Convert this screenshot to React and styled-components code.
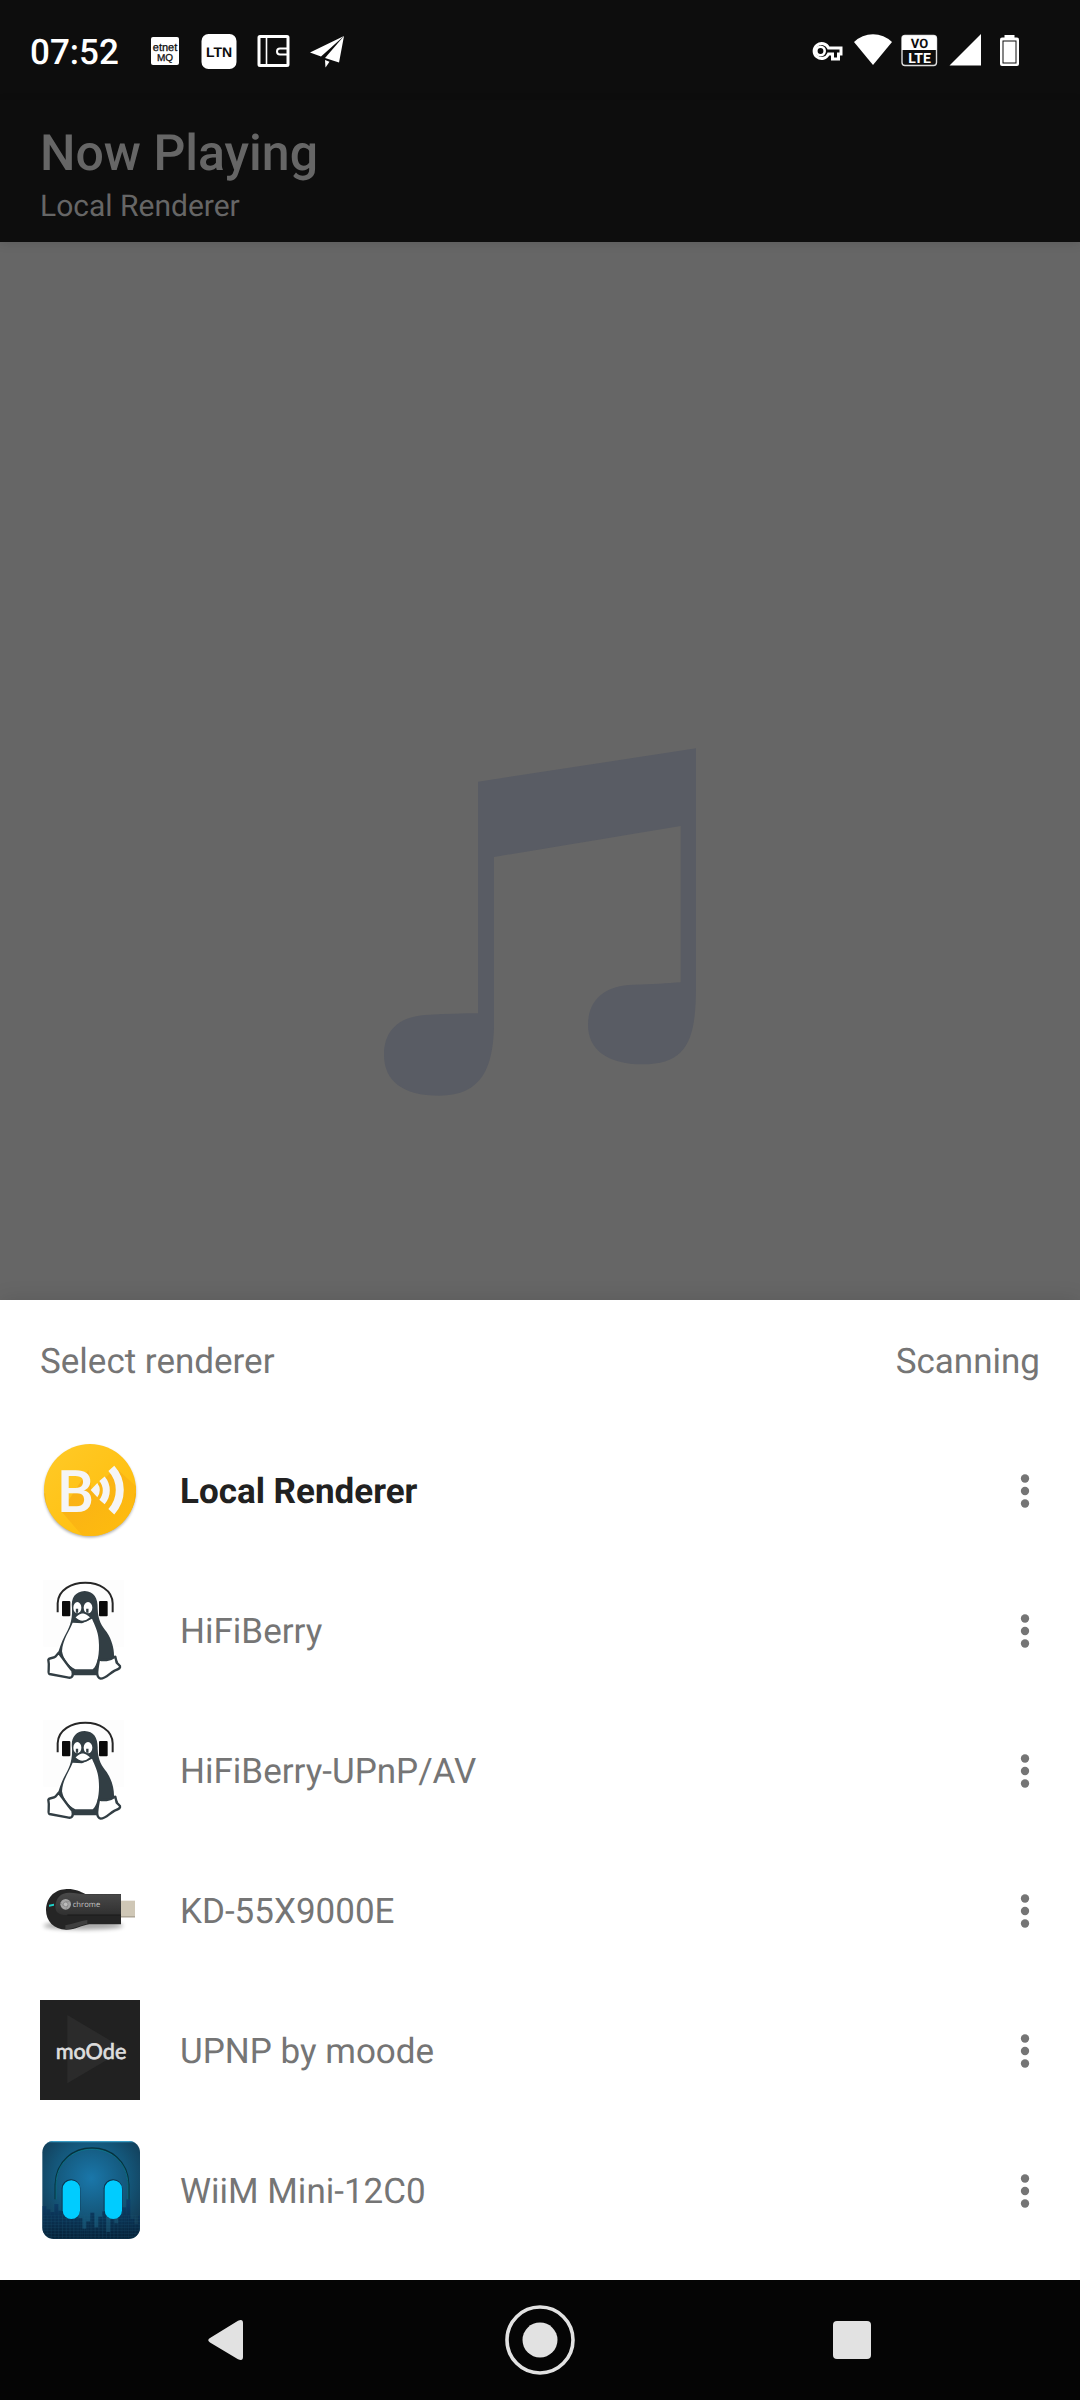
import React from "react";
import { useState } from "react";
import styled, { createGlobalStyle } from "styled-components";

const renderers = [
  { id: "local", name: "Local Renderer", logo: BubbleLogo },
  { id: "hifiberry", name: "HiFiBerry", logo: PenguinLogo },
  { id: "hifiberry-av", name: "HiFiBerry-UPnP/AV", logo: PenguinLogo },
  { id: "kd55", name: "KD-55X9000E", logo: ChromecastLogo },
  { id: "moode", name: "UPNP by moode", logo: MoodeLogo },
  { id: "wiim", name: "WiiM Mini-12C0", logo: HeadphonesLogo },
];

const App = () => {
  const [selected, setSelected] = useState("local");

  return (
    <PageWrapper>
      <GlobalStyle />
      <StatusBar>
        <Clock>07:52</Clock>
        <Notifications>
          <EtnetIcon />
          <LtnIcon />
          <WalletIcon />
          <PlaneIcon />
        </Notifications>
        <SystemIcons>
          <KeyIcon />
          <WifiIcon />
          <VolteIcon />
          <SignalIcon />
          <BatteryIcon />
        </SystemIcons>
      </StatusBar>
      <TitleBar>
        <Title>Now Playing</Title>
        <Subtitle>Local Renderer</Subtitle>
      </TitleBar>
      <Artwork>
        <NoteDrawing />
      </Artwork>
      <Sheet>
        <SheetHeader>
          <SheetTitle>Select renderer</SheetTitle>
          <span>Scanning</span>
        </SheetHeader>
        <RendererList>
          {renderers.map(({ id, name, logo: Logo }) => (
            <RendererRow key={id}>
              <RendererButton
                type="button"
                $active={selected === id}
                aria-pressed={selected === id}
                onClick={() => setSelected(id)}
              >
                <Logo />
                <RendererName>{name}</RendererName>
              </RendererButton>
              <MoreButton type="button" aria-label={`More options, ${name}`}>
                <MoreIcon />
              </MoreButton>
            </RendererRow>
          ))}
        </RendererList>
      </Sheet>
      <NavBar>
        <NavButton type="button" aria-label="Back">
          <svg width="72" height="72" viewBox="0 0 72 72">
            <path
              d="M18 34 L46 16.8 Q51 14.500 51 19 V53 Q51 57.500 46 55.200 L18 38.500 Q14.500 36 18 34Z"
              fill="#e2e2e2"
            />
          </svg>
        </NavButton>
        <NavButton type="button" aria-label="Home">
          <svg width="72" height="72" viewBox="0 0 72 72">
            <circle cx="36" cy="36" r="33" fill="none" stroke="#e2e2e2" strokeWidth="3.600" />
            <circle cx="36" cy="36" r="17.500" fill="#e2e2e2" />
          </svg>
        </NavButton>
        <NavButton type="button" aria-label="Recent apps">
          <svg width="72" height="72" viewBox="0 0 72 72">
            <rect x="17" y="17" width="38" height="38" rx="4" fill="#e2e2e2" />
          </svg>
        </NavButton>
      </NavBar>
    </PageWrapper>
  );
};

/* status bar icons */

function EtnetIcon() {
  return (
    <svg width="36" height="36" viewBox="0 0 36 36">
      <rect x="4" y="3" width="28" height="28" rx="2" fill="#fff" />
      <g fill="#0d0d0d" fontFamily="Liberation Sans, sans-serif" textAnchor="middle">
        <text x="18" y="17" fontSize="11" stroke="#0d0d0d" strokeWidth="0.300">
          etnet
        </text>
        <text x="18" y="26.500" fontSize="10" stroke="#0d0d0d" strokeWidth="0.300">
          MQ
        </text>
      </g>
    </svg>
  );
}

function LtnIcon() {
  return (
    <svg width="36" height="36" viewBox="0 0 36 36">
      <rect x="0.500" y="0" width="35" height="35" rx="7" fill="#fff" />
      <text
        x="18"
        y="22.500"
        fontSize="14"
        fontWeight="700"
        fill="#0d0d0d"
        fontFamily="Liberation Sans, sans-serif"
        textAnchor="middle"
      >
        LTN
      </text>
    </svg>
  );
}

function WalletIcon() {
  return (
    <svg width="36" height="36" viewBox="0 0 36 36">
      <g fill="none" stroke="#fff">
        <rect x="4" y="2.500" width="29" height="29" rx="1" strokeWidth="3" />
        <path d="M11.500 2 V32" strokeWidth="1.600" />
        <path d="M32 14.500 H25 a3 3 0 0 0 0 6 H32" strokeWidth="2" />
      </g>
    </svg>
  );
}

function PlaneIcon() {
  return (
    <svg width="36" height="36" viewBox="0 0 36 36">
      <path d="M1 18.500 L35 2 L12 22.500 Z" fill="#fff" />
      <path d="M35 2 L30 28.500 L16 24 Z" fill="#fff" />
      <path d="M16 26 L20.500 27.800 L16.500 33.500 Z" fill="#fff" />
      <path d="M28 9 L14 23.500" stroke="#0d0d0d" strokeWidth="0.800" />
    </svg>
  );
}

function KeyIcon() {
  return (
    <svg width="38" height="38" viewBox="0 2 38 38">
      <path
        d="M20.500 16 H33 V22 H30.500 V27 H24.500 V22 H20.500 A7.500 7.500 0 1 1 20.500 16Z"
        fill="none"
        stroke="#fff"
        strokeWidth="3"
      />
      <circle cx="12.500" cy="19" r="4.200" fill="none" stroke="#fff" strokeWidth="2.600" />
    </svg>
  );
}

function WifiIcon() {
  return (
    <svg width="38" height="38" viewBox="0 4 38 38">
      <path d="M0 12 A27 27 0 0 1 38 12 L19 35Z" fill="#fff" />
    </svg>
  );
}

function VolteIcon() {
  return (
    <svg width="38" height="38" viewBox="0 3 38 38">
      <rect x="2" y="4.500" width="34.500" height="30" rx="3" fill="#0d0d0d" stroke="#ddd" strokeWidth="1.400" />
      <path d="M2 7.500 a3 3 0 0 1 3 -3 H33.500 a3 3 0 0 1 3 3 V19 H2Z" fill="#fff" />
      <g fontFamily="Roboto, sans-serif" fontWeight="700" textAnchor="middle">
        <text x="19.500" y="16.500" fontSize="13" fill="#0d0d0d">
          VO
        </text>
        <text x="19.500" y="31.500" fontSize="14" fill="#fff">
          LTE
        </text>
      </g>
    </svg>
  );
}

function SignalIcon() {
  return (
    <svg width="38" height="38" viewBox="0 4 38 38">
      <path d="M3.500 35.500 L35 4 V35.500Z" fill="#fff" />
    </svg>
  );
}

function BatteryIcon() {
  return (
    <svg width="38" height="38" viewBox="0 3 38 38">
      <rect x="12.500" y="4" width="10" height="4" fill="#fff" />
      <rect x="8" y="6.500" width="19" height="28.500" rx="2" fill="#fff" />
      <rect x="11" y="10" width="13" height="22" fill="none" stroke="#0d0d0d" strokeWidth="1" />
    </svg>
  );
}

function MoreIcon() {
  return (
    <svg width="50" height="50" viewBox="0 0 24 24" fill="#757575">
      <circle cx="12" cy="6" r="2" />
      <circle cx="12" cy="12" r="2" />
      <circle cx="12" cy="18" r="2" />
    </svg>
  );
}

function NoteDrawing() {
  return (
    <svg width="312" height="348" viewBox="72 85 936 1044">
      <path
        fill="#595c64"
        d="M354 186 L1008 86 V800 C1008 960 982 1034 848 1034 C740 1034 684 988 684 916
           C684 840 735 797 820 795 C880 794 920 791 962 788 V319 L402 412 V925
           C398 1040 368 1128 238 1128 C126 1128 72 1082 72 1005
           C72 930 120 887 210 885 C260 883 310 881 354 881 Z"
      />
    </svg>
  );
}

/* renderer logos */

function BubbleLogo() {
  return (
    <LogoSvg viewBox="0 0 300 300">
      <defs>
        <linearGradient id="bubble" x1="0" y1="0" x2="1" y2="1">
          <stop offset="0" stopColor="#ffca28" />
          <stop offset="1" stopColor="#ffbc08" />
        </linearGradient>
        <linearGradient id="bubbleShade" x1="0" y1="0" x2="1" y2="1">
          <stop offset="0" stopColor="#f8ae1a" />
          <stop offset="1" stopColor="#ffbe0b" />
        </linearGradient>
        <filter id="bubbleBlur" x="-10%" y="-10%" width="120%" height="120%">
          <feGaussianBlur stdDeviation="4" />
        </filter>
        <clipPath id="bubbleClip">
          <circle cx="150" cy="150" r="138" />
        </clipPath>
      </defs>
      <circle cx="150" cy="155" r="137" fill="#000" opacity="0.350" filter="url(#bubbleBlur)" />
      <circle cx="150" cy="150" r="138" fill="url(#bubble)" />
      <g clipPath="url(#bubbleClip)">
        <path d="M64 214 L145 90 L155 150 L228 84 L300 150 V300 H138Z" fill="url(#bubbleShade)" />
        <path d="M14 160 A136 136 0 0 0 286 160" fill="none" stroke="#f2a600" strokeWidth="3" opacity="0.500" />
      </g>
      <g fill="none" stroke="#f5f5f5" strokeWidth="21">
        <path d="M186 116 A54 54 0 0 1 186 186" />
        <path d="M214 85 A96 96 0 0 1 214 215" strokeWidth="24" />
      </g>
      <path d="M152 150 L172 129 Q187 150 172 172Z" fill="#f5f5f5" />
      <text x="52" y="215" fontSize="176" fontWeight="500" fill="#f5f5f5" fontFamily="Roboto, sans-serif">
        B
      </text>
    </LogoSvg>
  );
}

function PenguinLogo() {
  return (
    <LogoSvg viewBox="0 0 300 300">
      <rect x="10" y="0" width="242" height="200" fill="#fdfdfd" />
      <path
        d="M53 97 V70 C56 -12 216 -12 218 70 V97"
        fill="none"
        stroke="#262626"
        strokeWidth="6"
      />
      <path
        d="M96 84 C92 54 106 34 134 33 C162 34 174 54 173 86 C174 122 186 138 200 156
           C216 180 222 206 222 226 L234 246 L182 286 H98 L50 232 C58 206 64 186 74 168
           C86 146 98 126 96 84Z"
        fill="#323e44"
      />
      <path
        d="M98 128 C90 150 68 178 66 214 C70 236 84 258 106 268 H158
           C172 258 180 220 176 180 C174 152 164 136 156 116 L126 130Z"
        fill="#fff"
      />
      <path
        d="M56 218 C64 228 84 258 97 272 C102 290 94 296 82 292 L28 282
           C22 280 30 262 25 240 C26 232 40 236 46 230Z"
        fill="#fff"
        stroke="#323e44"
        strokeWidth="7"
        strokeLinejoin="round"
      />
      <path
        d="M177 238 C188 242 210 242 226 230 L230 248 L240 258 C242 264 236 268 224 272
           C208 280 198 296 182 296 C166 292 172 268 177 238Z"
        fill="#fff"
        stroke="#323e44"
        strokeWidth="7"
        strokeLinejoin="round"
      />
      <ellipse cx="112" cy="83" rx="12" ry="17" fill="#fff" />
      <ellipse cx="144" cy="83" rx="13" ry="17" fill="#fff" />
      <path d="M111 98 V86 M142 98 V86" fill="none" stroke="#323e44" strokeWidth="7" />
      <path
        d="M103 112 Q118 98 128 97 Q138 98 154 112 Q140 124 127 125 Q116 124 103 112Z"
        fill="#fff"
        stroke="#323e44"
        strokeWidth="5"
      />
      <rect x="66" y="63" width="25" height="46" rx="3" fill="#0b0b0b" />
      <rect x="177" y="63" width="26" height="46" rx="3" fill="#0b0b0b" />
    </LogoSvg>
  );
}

function ChromecastLogo() {
  return (
    <LogoSvg viewBox="0 0 300 300">
      <defs>
        <linearGradient id="castBody" x1="0" y1="0" x2="0" y2="1">
          <stop offset="0" stopColor="#4a4a4a" />
          <stop offset="1" stopColor="#303030" />
        </linearGradient>
        <filter id="castBlur" x="-20%" y="-60%" width="140%" height="220%">
          <feGaussianBlur stdDeviation="7" />
        </filter>
      </defs>
      <ellipse cx="130" cy="197" rx="120" ry="12" fill="#000" opacity="0.350" filter="url(#castBlur)" />
      <rect x="240" y="122" width="45" height="50" fill="#cfc7b6" />
      <path d="M240 169 H285 V172 H240Z" fill="#9e9789" />
      <path
        d="M18 150 C20 106 50 88 80 87 C104 86 120 94 136 102 H243 V193 H148
           C126 196 104 210 78 209 C42 208 18 184 18 150Z"
        fill="#252525"
      />
      <path
        d="M46 140 C48 112 62 99 88 98 C106 98 120 102 136 103 H243 V165 H82
           C60 166 46 158 46 140Z"
        fill="url(#castBody)"
      />
      <path d="M82 165 H243" stroke="#1b1b1b" strokeWidth="3" />
      <path d="M76 208 C104 206 124 194 142 191 L142 180 C120 182 100 192 76 196Z" fill="#3f3f3f" />
      <path d="M27 134 L42 131 V137 L27 140Z" fill="#1fd0c8" />
      <circle cx="77" cy="133" r="16" fill="#a5a5a5" />
      <circle cx="77" cy="133" r="7" fill="#bdbdbd" stroke="#7d7d7d" strokeWidth="2" />
      <path d="M77 125 H91 M70 138 L62 127 M84 137 L77 149" stroke="#858585" strokeWidth="2" />
      <text x="98" y="140" fontSize="23" fill="#c4c4c4" fontFamily="Open Sans, sans-serif">
        chrome
      </text>
    </LogoSvg>
  );
}

function MoodeLogo() {
  return (
    <LogoSvg viewBox="0 0 300 300">
      <rect width="300" height="300" fill="#212121" />
      <path d="M82 45 L255 148 L82 250Z" fill="#2b2b2b" />
      <text
        x="153"
        y="177"
        fontSize="65"
        fill="#dedede"
        stroke="#dedede"
        strokeWidth="2"
        fontFamily="Lato, sans-serif"
        textAnchor="middle"
      >
        moOde
      </text>
    </LogoSvg>
  );
}

function HeadphonesLogo() {
  // heights of the equaliser columns along the bottom edge
  const bars = [98, 88, 80, 104, 84, 96, 70, 90, 78, 62, 30, 52, 78, 34, 66, 82, 20, 58, 46, 74, 94, 118, 60, 44, 70];

  return (
    <LogoSvg viewBox="0 0 300 300">
      <defs>
        <radialGradient id="phonesBg" cx="0.500" cy="0.380" r="0.650">
          <stop offset="0" stopColor="#1a77aa" />
          <stop offset="0.600" stopColor="#145679" />
          <stop offset="1" stopColor="#123a53" />
        </radialGradient>
        <linearGradient id="phonesBars" x1="0" y1="190" x2="0" y2="300" gradientUnits="userSpaceOnUse">
          <stop offset="0" stopColor="#0c3b66" />
          <stop offset="1" stopColor="#031c31" />
        </linearGradient>
        <pattern id="phonesGrid" width="11" height="9" patternUnits="userSpaceOnUse">
          <path d="M0 0 H11 M0 0 V9" stroke="#1a5a80" strokeWidth="1.500" opacity="0.600" />
        </pattern>
        <clipPath id="phonesClip">
          <rect x="7" y="3" width="293" height="293" rx="34" />
        </clipPath>
      </defs>
      <rect x="7" y="3" width="293" height="294" rx="34" fill="url(#phonesBg)" />
      <g clipPath="url(#phonesClip)">
        <path d="M7 5 H300" stroke="#3a9cc4" strokeWidth="4" />
        {bars.map((height, i) => (
          <rect key={i} x={7 + i * 12} y={296 - height} width="12" height={height} fill="url(#phonesBars)" opacity="0.850" />
        ))}
        <rect x="7" y="226" width="293" height="70" fill="url(#phonesGrid)" />
      </g>
      <path
        d="M46 178 V134 C50 -12 262 -12 266 134 V178"
        fill="none"
        stroke="#06323f"
        strokeWidth="5"
      />
      <path
        d="M48 178 V134 C52 -8 260 -8 264 134 V178"
        fill="none"
        stroke="#0c8494"
        strokeWidth="2"
      />
      <rect x="65" y="118" width="56" height="118" rx="27" fill="#0b3550" />
      <rect x="191" y="118" width="56" height="118" rx="27" fill="#0b3550" />
      <rect x="68" y="121" width="52" height="116" rx="26" fill="#00ccff" />
      <rect x="194" y="121" width="52" height="116" rx="26" fill="#00ccff" />
    </LogoSvg>
  );
}

const GlobalStyle = createGlobalStyle`
  * {
    box-sizing: border-box;
  }
  body {
    margin: 0;
    font-family: Roboto, sans-serif;
    text-rendering: geometricPrecision;
    background-color: #666666;
  }
  button {
    font: inherit;
    text-rendering: inherit;
  }
  svg {
    display: block;
    flex: none;
  }
`;
const PageWrapper = styled.div`
  display: flex;
  flex-direction: column;
  min-height: 100vh;
`;
const StatusBar = styled.div`
  display: flex;
  align-items: flex-start;
  padding: 34px 50px 28px 30px;
  background-color: #0d0d0d;
  color: #ffffff;
`;
const Clock = styled.span`
  font-size: 35px;
  line-height: 38px;
  font-weight: 500;
`;
const Notifications = styled.div`
  display: flex;
  gap: 18px;
  margin-left: 28px;
`;
const SystemIcons = styled.div`
  display: flex;
  gap: 8px;
  margin-left: auto;
`;
const TitleBar = styled.header`
  position: relative;
  padding: 24px 40px 17px;
  background-color: #0d0d0d;
  box-shadow: 0 2px 10px rgba(0, 0, 0, 0.1);
`;
const Title = styled.h1`
  margin: 0 0 5px;
  font-size: 50px;
  line-height: 60px;
  font-weight: 500;
  color: #666666;
`;
const Subtitle = styled.p`
  margin: 0;
  font-size: 30px;
  line-height: 36px;
  color: #666666;
`;
const Artwork = styled.main`
  flex: 1;
  display: flex;
  align-items: flex-end;
  justify-content: center;
  padding: 80px 40px 204px;
  background-color: #666666;
`;
const Sheet = styled.section`
  position: relative;
  padding-bottom: 20px;
  background-color: #ffffff;
  box-shadow: 0 0 20px rgba(0, 0, 0, 0.12);
`;
const SheetHeader = styled.div`
  display: flex;
  align-items: center;
  justify-content: space-between;
  height: 120px;
  padding: 2px 40px 0;
  font-size: 35px;
  color: #757575;
`;
const SheetTitle = styled.h2`
  margin: 0;
  font-size: 35px;
  font-weight: 400;
`;
const RendererList = styled.ul`
  margin: 0;
  padding: 0;
  list-style: none;
`;
const RendererRow = styled.li`
  display: flex;
  align-items: center;
  padding-right: 30px;
`;
const RendererButton = styled.button`
  flex: 1;
  display: flex;
  align-items: center;
  gap: 40px;
  padding: 20px 40px;
  border: none;
  background: none;
  font-size: 35px;
  font-weight: ${({ $active }) => ($active ? 700 : 400)};
  color: ${({ $active }) => ($active ? "#212121" : "#757575")};
  text-align: left;
  cursor: pointer;
`;
const RendererName = styled.span`
  padding-top: 2px;
`;
const LogoSvg = styled.svg`
  width: 100px;
  height: 100px;
`;
const MoreButton = styled.button`
  padding: 2px 0 0;
  border: none;
  background: none;
  cursor: pointer;
`;
const NavBar = styled.nav`
  position: relative;
  display: flex;
  align-items: center;
  justify-content: space-around;
  padding: 24px 72px;
  background-color: #050505;
`;
const NavButton = styled.button`
  padding: 0;
  border: none;
  background: none;
  cursor: pointer;
`;

export default App;
